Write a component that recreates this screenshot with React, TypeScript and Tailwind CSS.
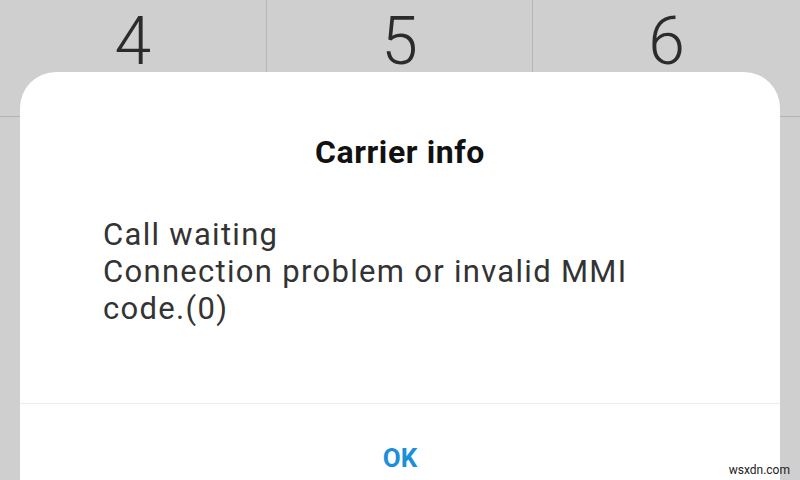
import React from 'react';

const digits = ['4', '5', '6'];

function App() {
  return (
    <div className="relative w-[800px] h-[480px] overflow-hidden bg-[#cfcfcf] font-['Roboto',sans-serif]">
      {/* dial pad behind the dialog */}
      <div className="grid grid-cols-3 h-[117px] border-b border-[#b4b4b4]">
        {digits.map((d, i) => (
          <div
            key={d}
            className={`flex justify-center pt-[9px] ${i < 2 ? 'border-r border-[#b8b8b8]' : ''}`}
          >
            <span className="text-[66px] leading-none font-light text-[#2b2b2b]">{d}</span>
          </div>
        ))}
      </div>

      {/* carrier info dialog */}
      <div className="absolute left-[20px] right-[20px] top-[72px] h-[408px] bg-white rounded-t-[36px] flex flex-col">
        <div className="pt-[64px] text-center text-[32px] leading-none font-bold tracking-[0.6px] text-[#111]">
          Carrier info
        </div>
        <div className="flex-1 mt-[48px] pl-[83px] text-[31px] leading-[37px] tracking-[1.3px] text-[#333]">
          <div>Call waiting</div>
          <div>Connection problem or invalid MMI</div>
          <div>code.(0)</div>
        </div>
        <div className="border-t border-[#ececec] h-[77px] flex justify-center pt-[41px]">
          <span className="text-[26px] leading-none font-bold text-[#1c8fdb]">OK</span>
        </div>
      </div>

      <span className="absolute right-[10px] bottom-[1px] text-[12px] text-[#222]">wsxdn.com</span>
    </div>
  );
}

export default App;
